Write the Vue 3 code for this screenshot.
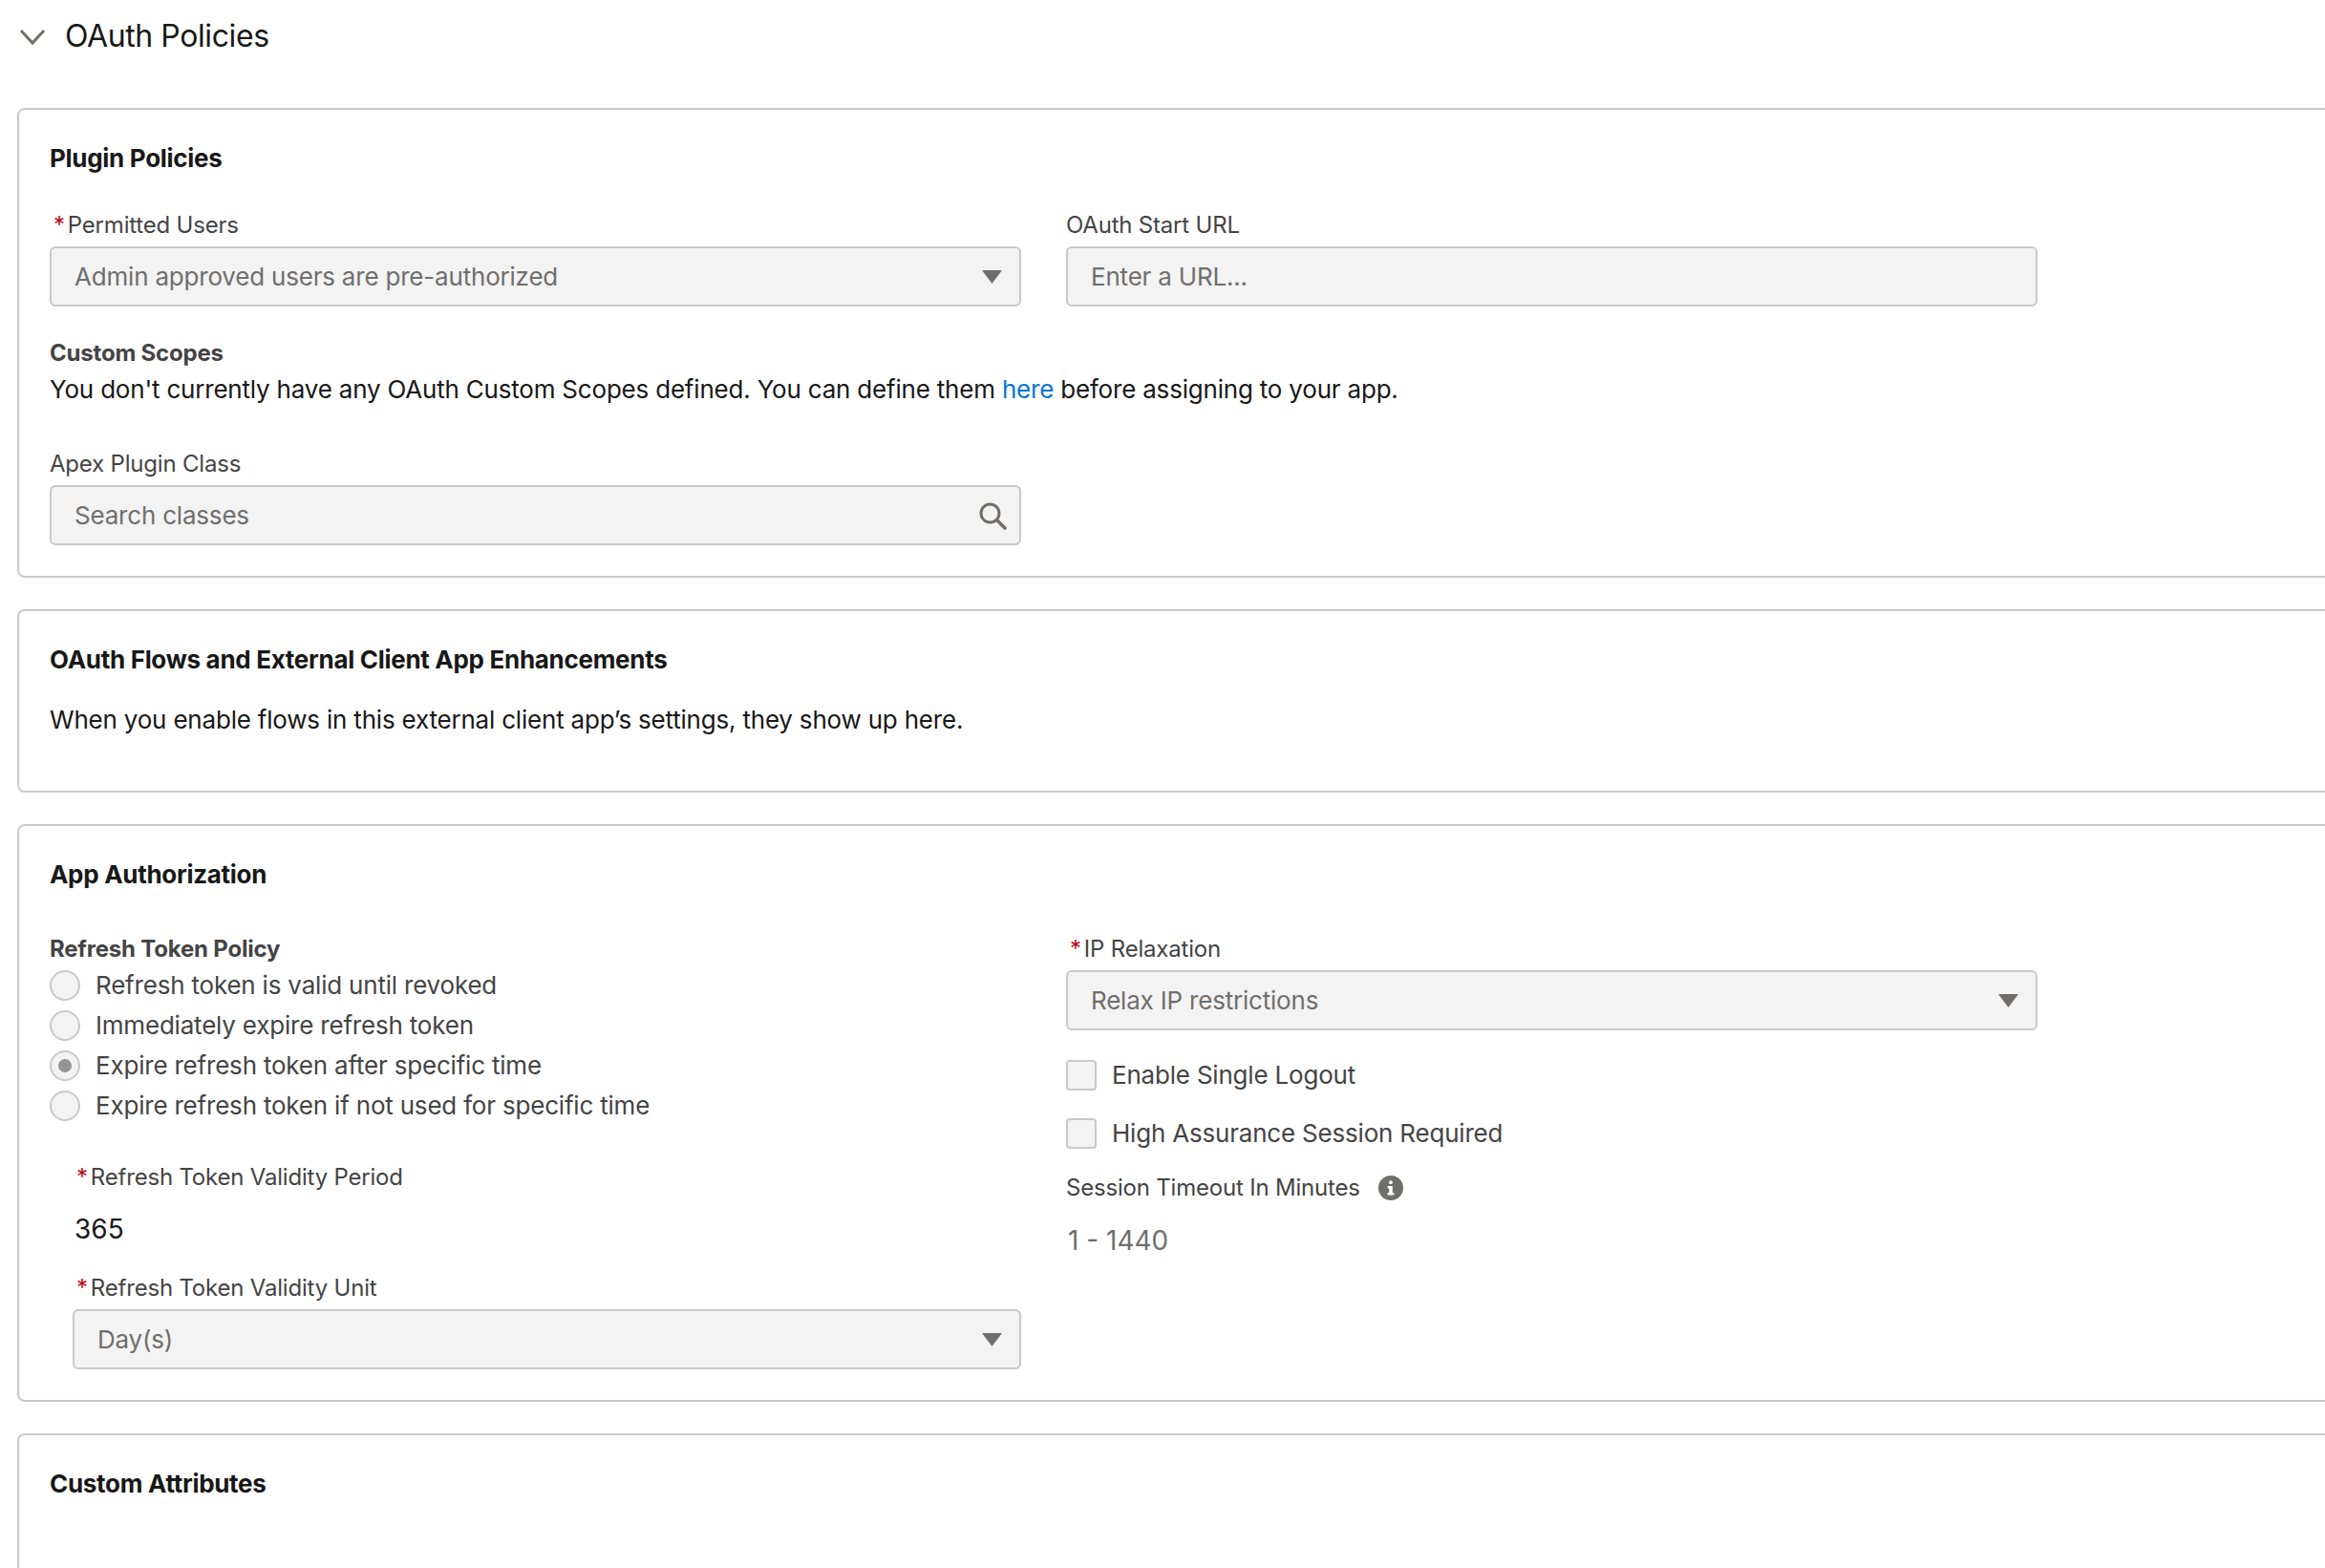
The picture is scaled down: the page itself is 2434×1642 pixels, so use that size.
<script setup>
const refreshOptions = [
  { label: "Refresh token is valid until revoked", checked: false },
  { label: "Immediately expire refresh token", checked: false },
  { label: "Expire refresh token after specific time", checked: true },
  { label: "Expire refresh token if not used for specific time", checked: false },
];
</script>

<template>
  <div class="page">
    <header class="section-head">
      <svg class="chevron" viewBox="0 0 28 18" width="28" height="18">
        <path d="M2 2 L14 15 L26 2" fill="none" stroke="#706e6b" stroke-width="3" />
      </svg>
      <h2 class="section-title">OAuth Policies</h2>
    </header>

    <section class="panel plugin">
      <h3 class="panel-title">Plugin Policies</h3>
      <div class="two-col first-row">
        <div>
          <div class="label"><span class="req">*</span>Permitted Users</div>
          <div class="field">
            <span>Admin approved users are pre-authorized</span>
            <svg class="arrow" viewBox="0 0 21 14" width="21" height="14"><path d="M0 0 H21 L10.5 14 Z" fill="#706e6b" /></svg>
          </div>
        </div>
        <div>
          <div class="label">OAuth Start URL</div>
          <div class="field"><span>Enter a URL...</span></div>
        </div>
      </div>
      <div class="label bold scopes-label">Custom Scopes</div>
      <p class="body-text scopes-text">
        You don't currently have any OAuth Custom Scopes defined. You can define them
        <a class="link">here</a> before assigning to your app.
      </p>
      <div class="half apex">
        <div class="label">Apex Plugin Class</div>
        <div class="field">
          <span>Search classes</span>
          <svg class="search" viewBox="0 0 30 30" width="30" height="30">
            <circle cx="12.5" cy="12.5" r="9.5" fill="none" stroke="#706e6b" stroke-width="3" />
            <path d="M19.5 19.5 L28 28" stroke="#706e6b" stroke-width="3.6" stroke-linecap="round" />
          </svg>
        </div>
      </div>
    </section>

    <section class="panel flows">
      <h3 class="panel-title">OAuth Flows and External Client App Enhancements</h3>
      <p class="body-text flows-text">When you enable flows in this external client app’s settings, they show up here.</p>
    </section>

    <section class="panel auth">
      <h3 class="panel-title">App Authorization</h3>
      <div class="two-col auth-row">
        <div>
          <div class="label bold">Refresh Token Policy</div>
          <div class="radios">
            <div v-for="opt in refreshOptions" :key="opt.label" class="radio-row">
              <span class="radio" :class="{ on: opt.checked }"></span>
              <span class="option-text">{{ opt.label }}</span>
            </div>
          </div>
          <div class="nested">
            <div class="label period-label"><span class="req">*</span>Refresh Token Validity Period</div>
            <div class="value">365</div>
            <div class="label unit-label"><span class="req">*</span>Refresh Token Validity Unit</div>
            <div class="field">
              <span>Day(s)</span>
              <svg class="arrow" viewBox="0 0 21 14" width="21" height="14"><path d="M0 0 H21 L10.5 14 Z" fill="#706e6b" /></svg>
            </div>
          </div>
        </div>
        <div>
          <div class="label"><span class="req">*</span>IP Relaxation</div>
          <div class="field">
            <span>Relax IP restrictions</span>
            <svg class="arrow" viewBox="0 0 21 14" width="21" height="14"><path d="M0 0 H21 L10.5 14 Z" fill="#706e6b" /></svg>
          </div>
          <div class="check-row logout"><span class="check"></span><span class="option-text">Enable Single Logout</span></div>
          <div class="check-row assurance"><span class="check"></span><span class="option-text">High Assurance Session Required</span></div>
          <div class="label timeout-label">
            Session Timeout In Minutes
            <svg class="info" viewBox="0 0 26 26" width="26" height="26">
              <circle cx="13" cy="13" r="13" fill="#706e6b" />
              <rect x="11.2" y="5.5" width="3.6" height="3.4" rx="1" fill="#fff" />
              <path d="M9.6 11 H14.8 V18 H16.4 V20.4 H9.6 V18 H11.2 V13.4 H9.6 Z" fill="#fff" />
            </svg>
          </div>
          <div class="value muted timeout-value">1 - 1440</div>
        </div>
      </div>
    </section>

    <section class="panel custom">
      <h3 class="panel-title">Custom Attributes</h3>
    </section>
  </div>
</template>

<style>
html,
body {
  margin: 0;
  background: #fff;
}
</style>

<style scoped>
.page {
  width: 2434px;
  height: 1642px;
  overflow: hidden;
  box-sizing: border-box;
  padding-left: 18px;
  font-family: Inter, "Liberation Sans", sans-serif;
  color: #181818;
}
.section-head {
  display: flex;
  align-items: center;
  height: 76px;
  margin-left: 2px;
  gap: 20px;
}
.chevron {
  flex: none;
  margin-top: 2px;
}
.section-title {
  margin: 0;
  font-size: 32px;
  font-weight: 400;
  line-height: 40px;
  letter-spacing: -0.4px;
}
.panel {
  box-sizing: border-box;
  width: 2600px;
  border: 2px solid #c9c9c9;
  border-radius: 8px;
  padding: 33px 32px 32px;
  margin-bottom: 33px;
}
.section-head + .panel {
  margin-top: 37px;
}
.panel-title {
  margin: 0;
  font-size: 26px;
  font-weight: 700;
  line-height: 36px;
  letter-spacing: -0.3px;
}
.two-col {
  display: grid;
  grid-template-columns: 1017px 1017px;
  column-gap: 47px;
}
.first-row {
  margin-top: 36px;
}
.half {
  width: 1017px;
}
.label {
  font-size: 24px;
  line-height: 32px;
  color: #444;
  letter-spacing: -0.2px;
  margin-bottom: 6px;
}
.bold {
  font-weight: 700;
}
.req {
  color: #ba0517;
  margin: 0 3px 0 4px;
}
.field {
  box-sizing: border-box;
  height: 63px;
  display: flex;
  align-items: center;
  justify-content: space-between;
  background: #f3f3f3;
  border: 2px solid #c9c9c9;
  border-radius: 6px;
  padding: 0 18px 0 24px;
  font-size: 26px;
  color: #706e6b;
  letter-spacing: -0.2px;
}
.arrow {
  flex: none;
}
.search {
  flex: none;
  margin-right: -5px;
}
.scopes-label {
  margin: 33px 0 0;
}
.body-text {
  margin: 0;
  font-size: 26px;
  line-height: 36px;
  letter-spacing: -0.2px;
}
.scopes-text {
  margin-top: 4px;
}
.link {
  color: #0176d3;
}
.apex {
  margin-top: 44px;
}
.flows-text {
  margin-top: 27px;
}
.flows {
  height: 192px;
}
.auth-row {
  margin-top: 44px;
}
.radios {
  display: flex;
  flex-direction: column;
  gap: 10px;
  margin-top: 4px;
}
.radio-row,
.check-row {
  display: flex;
  align-items: center;
  height: 32px;
  gap: 16px;
}
.radio {
  box-sizing: border-box;
  width: 32px;
  height: 32px;
  border-radius: 50%;
  background: #f3f3f3;
  border: 2px solid #c9c9c9;
  position: relative;
}
.radio.on::after {
  content: "";
  position: absolute;
  inset: 7px;
  border-radius: 50%;
  background: #939393;
}
.option-text {
  font-size: 26px;
  line-height: 32px;
  color: #444;
  letter-spacing: -0.2px;
}
.nested {
  margin-left: 24px;
  margin-top: 43px;
}
.period-label {
  margin: 0;
}
.value {
  font-size: 28px;
  line-height: 36px;
  margin-top: 20px;
  margin-left: 2px;
}
.unit-label {
  margin-top: 28px;
}
.muted {
  color: #706e6b;
}
.check {
  box-sizing: border-box;
  width: 32px;
  height: 32px;
  background: #f3f3f3;
  border: 2px solid #c9c9c9;
  border-radius: 4px;
}
.logout {
  margin-top: 31px;
}
.assurance {
  margin-top: 29px;
}
.timeout-label {
  display: flex;
  align-items: center;
  gap: 19px;
  margin: 25px 0 0;
}
.timeout-value {
  margin-top: 21px;
}
.custom {
  height: 300px;
}
</style>
